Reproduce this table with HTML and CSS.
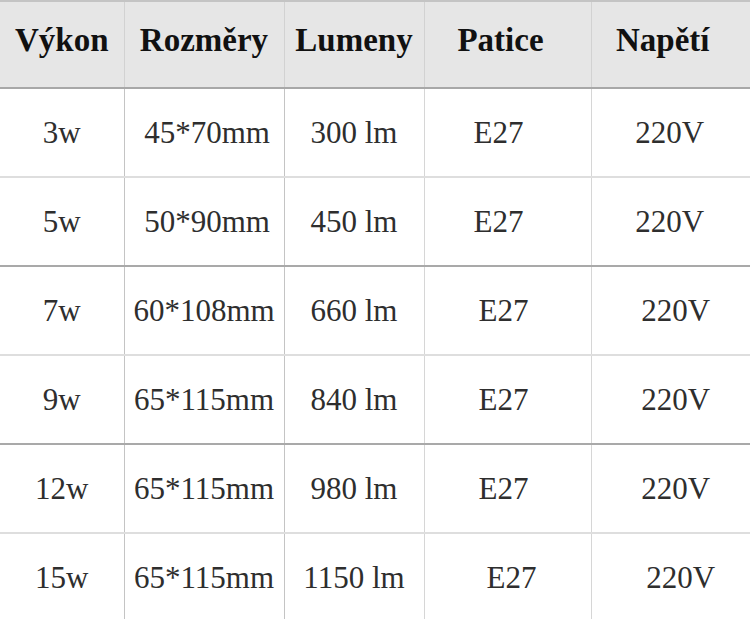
FILE: index.html
```html
<!DOCTYPE html>
<html lang="cs">
<head>
<meta charset="utf-8">
<link rel="stylesheet" href="styles.css">
</head>
<body>
<table class="spec">
  <colgroup>
    <col class="c1"><col class="c2"><col class="c3"><col class="c4"><col class="c5">
  </colgroup>
  <thead>
    <tr><th>Výkon</th><th>Rozměry</th><th>Lumeny</th><th class="pat">Patice</th><th class="nap">Napětí</th></tr>
  </thead>
  <tbody>
    <tr class="light"><td>3w</td><td class="dim">45*70mm</td><td>300 lm</td><td class="e1">E27</td><td class="v1">220V</td></tr>
    <tr class="dark"><td>5w</td><td class="dim">50*90mm</td><td>450 lm</td><td class="e1">E27</td><td class="v1">220V</td></tr>
    <tr class="light"><td>7w</td><td>60*108mm</td><td>660 lm</td><td class="e2">E27</td><td class="v2">220V</td></tr>
    <tr class="dark"><td>9w</td><td>65*115mm</td><td>840 lm</td><td class="e2">E27</td><td class="v2">220V</td></tr>
    <tr class="light"><td>12w</td><td>65*115mm</td><td>980 lm</td><td class="e2">E27</td><td class="v2">220V</td></tr>
    <tr class="last"><td>15w</td><td>65*115mm</td><td>1150 lm</td><td class="e3">E27</td><td class="v3">220V</td></tr>
  </tbody>
</table>
</body>
</html>
```
FILE: styles.css
```css
html, body {
  margin: 0;
  padding: 0;
  background: #fff;
}
.spec {
  border-collapse: collapse;
  table-layout: fixed;
  width: 750px;
  color: #222;
}
.c1 { width: 124px; }
.c2 { width: 160px; }
.c3 { width: 140px; }
.c4 { width: 167px; }
.c5 { width: 159px; }

.spec th {
  height: 76px;
  background: #e6e6e6;
  border-top: 2px solid #c4c4c4;
  border-bottom: 2px solid #a8a8a8;
  border-left: 1px solid #d2d2d2;
  font-family: "Liberation Serif", serif;
  font-weight: bold;
  font-size: 33px;
  color: #111;
  text-align: center;
  vertical-align: middle;
  padding: 0 0 9px 0;
}
.spec th:first-child { border-left: none; }
.spec th.pat { padding-right: 14px; }
.spec th.nap { padding-right: 16px; }

.spec td {
  height: 87px;
  padding: 0;
  text-align: center;
  vertical-align: middle;
  font-family: "Liberation Serif", serif;
  font-size: 31px;
  color: #2e2e2e;
  border-left: 1px solid #d6d6d6;
}
.spec td:first-child { border-left: none; }
.spec td:nth-child(2),
.spec td:nth-child(3) { border-left-color: #c4c4c4; }

.spec tr.light td { border-bottom: 2px solid #dedede; }
.spec tr.dark td { border-bottom: 2px solid #a9a9a9; }
.spec tr.last td { height: 88px; }

.spec td.dim { padding-left: 6px; }
.spec td.e1 { padding-right: 18px; }
.spec td.e2 { padding-right: 8px; }
.spec td.e3 { padding-left: 8px; }
.spec td.v1 { padding-right: 2px; }
.spec td.v2 { padding-left: 10px; }
.spec td.v3 { padding-left: 20px; }
```
